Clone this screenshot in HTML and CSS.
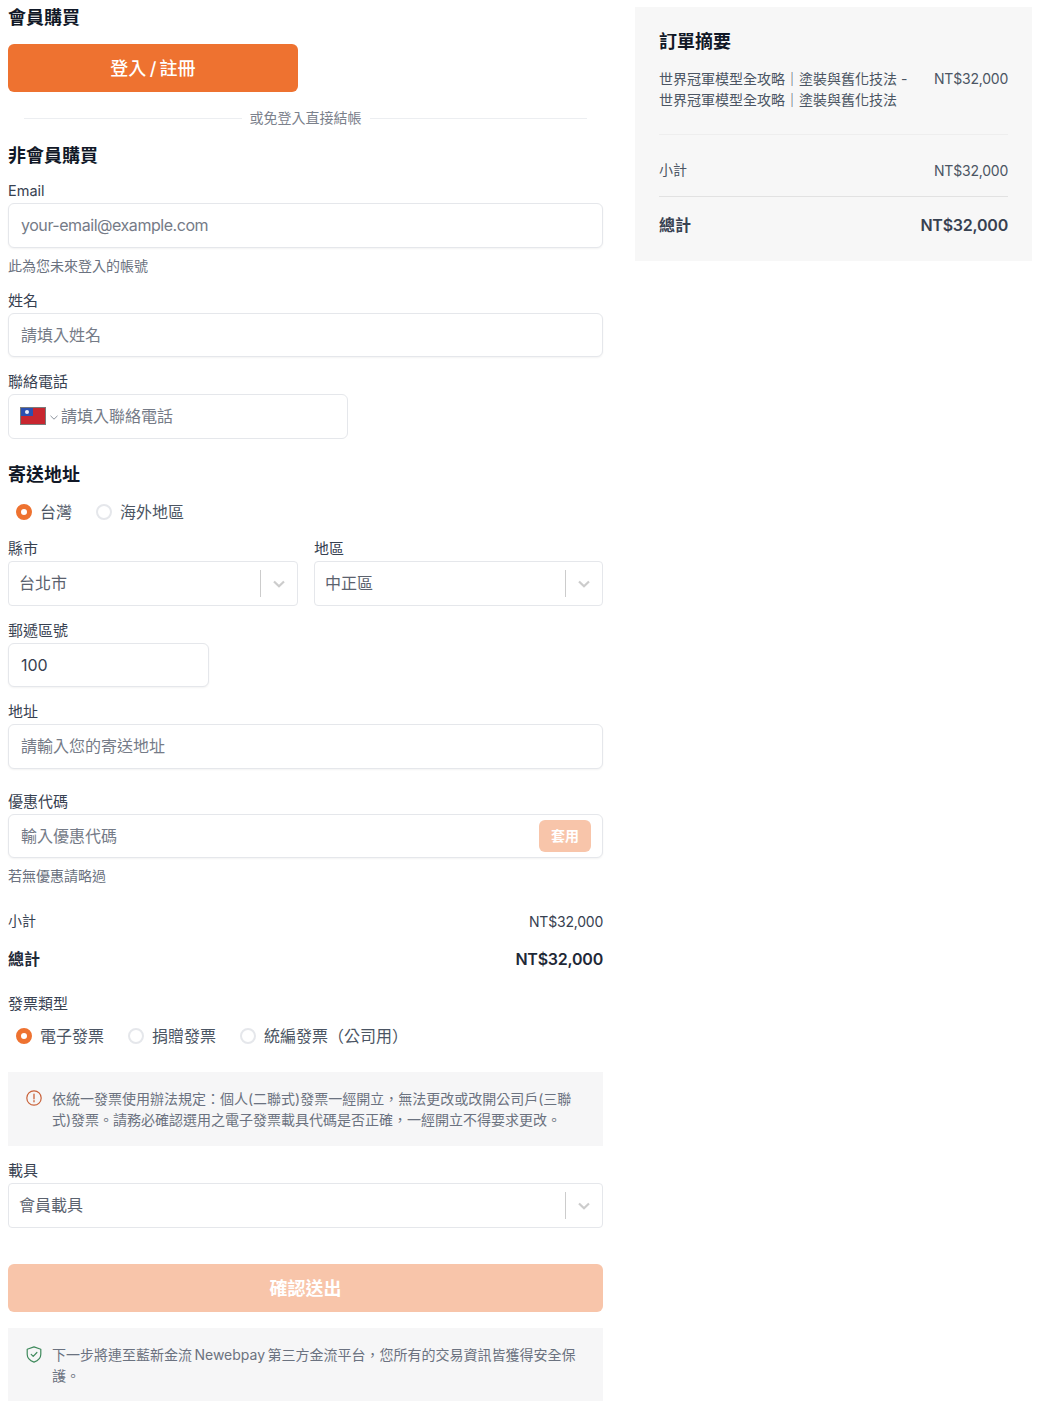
FILE: index.html
```html
<!DOCTYPE html>
<html lang="zh-Hant">
<head>
<meta charset="utf-8">
<title>結帳</title>
<link rel="stylesheet" href="styles.css">
</head>
<body>
<div class="layout">
  <main class="form">
    <h2 class="title">會員購買</h2>
    <button class="btn btn-login" type="button">登入 / 註冊</button>
    <div class="divider"><span class="divider-line"></span><span class="divider-text">或免登入直接結帳</span><span class="divider-line"></span></div>
    <h2 class="title title-guest">非會員購買</h2>

    <div class="field field-email">
      <label class="label label-latin">Email</label>
      <input class="input input-tall input-email" placeholder="your-email@example.com">
      <p class="hint">此為您未來登入的帳號</p>
    </div>
    <div class="field field-name">
      <label class="label">姓名</label>
      <input class="input" placeholder="請填入姓名">
    </div>
    <div class="field field-phone">
      <label class="label">聯絡電話</label>
      <div class="input phone input-tall">
        <svg class="flag" width="26" height="18" viewBox="0 0 26 18"><rect width="26" height="18" fill="#7a7a7a"/><rect x="1" y="1" width="24" height="16" fill="#c8262f"/><rect x="1" y="1" width="12" height="8" fill="#2b50b0"/><circle cx="7" cy="5" r="2" fill="#e8ecf8"/></svg>
        <svg class="phone-caret" width="8" height="5" viewBox="0 0 8 5"><path d="M.5.8 4 4.200 7.500.8" fill="none" stroke="#8b929c" stroke-width="1"/></svg>
        <input class="phone-input" placeholder="請填入聯絡電話">
      </div>
    </div>

    <h2 class="title title-ship">寄送地址</h2>
    <div class="radios radios-ship">
      <label class="radio"><span class="dot dot-on"></span>台灣</label>
      <label class="radio"><span class="dot"></span>海外地區</label>
    </div>
    <div class="two">
      <div class="two-a">
        <label class="label">縣市</label>
        <div class="select"><span class="select-value">台北市</span><span class="select-sep"></span><svg class="chev" width="12" height="8" viewBox="0 0 12 8"><path d="M1 1.500 6 6.300l5-4.800" fill="none" stroke="#ccc" stroke-width="2.200"/></svg></div>
      </div>
      <div class="two-b">
        <label class="label">地區</label>
        <div class="select"><span class="select-value">中正區</span><span class="select-sep"></span><svg class="chev" width="12" height="8" viewBox="0 0 12 8"><path d="M1 1.500 6 6.300l5-4.800" fill="none" stroke="#ccc" stroke-width="2.200"/></svg></div>
      </div>
    </div>
    <div class="field field-zip">
      <label class="label">郵遞區號</label>
      <input class="input input-zip" value="100">
    </div>
    <div class="field field-addr">
      <label class="label">地址</label>
      <input class="input input-tall" placeholder="請輸入您的寄送地址">
    </div>
    <div class="field field-coupon">
      <label class="label">優惠代碼</label>
      <div class="coupon">
        <input class="input input-coupon" placeholder="輸入優惠代碼">
        <button class="btn-apply" type="button">套用</button>
      </div>
      <p class="hint hint-coupon">若無優惠請略過</p>
    </div>

    <div class="row row-sub"><span>小計</span><span class="money">NT$32,000</span></div>
    <div class="row row-total"><span>總計</span><span class="money">NT$32,000</span></div>

    <div class="field field-invoice">
      <label class="label">發票類型</label>
    </div>
    <div class="radios radios-invoice">
      <label class="radio"><span class="dot dot-on"></span>電子發票</label>
      <label class="radio"><span class="dot"></span>捐贈發票</label>
      <label class="radio"><span class="dot"></span>統編發票（公司用）</label>
    </div>
    <div class="notice notice-invoice">
      <svg class="notice-icon" width="16" height="16" viewBox="0 0 16 16"><circle cx="8" cy="8" r="7.200" fill="none" stroke="#c9623a" stroke-width="1.200"/><path d="M8 4.200v4.600M8 10.600v1.200" stroke="#c9623a" stroke-width="1.300" stroke-linecap="round"/></svg>
      <p>依統一發票使用辦法規定：個人(二聯式)發票一經開立，無法更改或改開公司戶(三聯式)發票。請務必確認選用之電子發票載具代碼是否正確，一經開立不得要求更改。</p>
    </div>
    <div class="field field-carrier">
      <label class="label">載具</label>
      <div class="select"><span class="select-value">會員載具</span><span class="select-sep"></span><svg class="chev" width="12" height="8" viewBox="0 0 12 8"><path d="M1 1.500 6 6.300l5-4.800" fill="none" stroke="#ccc" stroke-width="2.200"/></svg></div>
    </div>
    <button class="btn btn-submit" type="button">確認送出</button>
    <div class="notice notice-pay">
      <svg class="notice-icon" width="16" height="17" viewBox="0 0 16 17"><path d="M8 .9 14.800 3.200v5c0 3.600-2.700 6.400-6.800 7.900C3.900 14.600 1.200 11.800 1.200 8.200v-5L8 .9Z" fill="none" stroke="#3f8a5c" stroke-width="1.200" stroke-linejoin="round"/><path d="M5.200 8.300 7.200 10.300 10.900 6.500" fill="none" stroke="#3f8a5c" stroke-width="1.200" stroke-linecap="round" stroke-linejoin="round"/></svg>
      <p>下一步將連至藍新金流 Newebpay 第三方金流平台，您所有的交易資訊皆獲得安全保護。</p>
    </div>
  </main>

  <aside class="summary">
    <h2 class="title summary-title">訂單摘要</h2>
    <div class="item">
      <p class="item-name">世界冠軍模型全攻略｜塗裝與舊化技法 - 世界冠軍模型全攻略｜塗裝與舊化技法</p>
      <span class="item-price money">NT$32,000</span>
    </div>
    <div class="sum-row sum-sub"><span>小計</span><span class="money">NT$32,000</span></div>
    <div class="sum-row sum-total"><span>總計</span><span class="money money-total">NT$32,000</span></div>
  </aside>
</div>
</body>
</html>
```

FILE: styles.css
```css
* { box-sizing: border-box; }
html, body { margin: 0; padding: 0; background: #fff; }
body {
  font-family: Inter, "Noto Sans CJK TC", sans-serif;
  font-size: 14px;
  line-height: 20px;
  color: #374151;
}
p, h2 { margin: 0; }
button, input { font-family: inherit; }

.layout {
  display: grid;
  grid-template-columns: 595px 397px;
  gap: 32px;
  align-items: start;
  padding: 4px 12px 0 8px;
  width: 1044px;
}

.money { letter-spacing: -.22px; margin-top: 2px; }
.money-total, .row-total .money { margin-top: 0; }

.title { font-size: 18px; line-height: 28px; font-weight: 700; color: #111827; }
.title-guest { margin-top: 14px; }
.title-ship { margin-top: 22px; }

.btn {
  display: block;
  border: 0;
  border-radius: 6px;
  height: 48px;
  padding: 0 0 2px;
  color: #fff;
  font-size: 18px;
  font-weight: 600;
}
.btn-login { width: 290px; margin-top: 12px; background: #ee7230; font-weight: 500; word-spacing: -1.500px; }
.btn-submit { width: 100%; margin-top: 36px; background: #f8c5aa; }

.divider { display: flex; align-items: center; gap: 8px; margin-top: 16px; padding: 0 16px; }
.divider-line { flex: 1; height: 1px; background: #eceef1; }
.divider-text { color: #7b818c; }

.label { display: block; height: 20px; margin-bottom: 2px; font-size: 15px; color: #374151; }
.label-latin { font-size: 14.500px; }
.field { margin-top: 14px; }
.field-email { margin-top: 11px; }
.field-name { margin-top: 15px; }
.field-phone { margin-top: 15px; }
.field-zip { margin-top: 15px; }
.field-addr { margin-top: 15px; }
.field-coupon { margin-top: 23px; }
.field-invoice { margin-top: 23px; }
.field-invoice .label { margin-bottom: 0; }
.field-carrier { margin-top: 15px; }

.input {
  display: block;
  width: 100%;
  height: 44px;
  padding: 0 12px;
  border: 1px solid #e5e7eb;
  border-radius: 6px;
  background: #fff;
  box-shadow: 0 1px 2px rgba(0, 0, 0, .05);
  font-size: 16px;
  color: #374151;
  outline: 0;
}
.input-tall { height: 45px; padding-bottom: 2px; }
.input-email { letter-spacing: -.45px; }
.input::placeholder, .phone-input::placeholder { color: #757b87; opacity: 1; }
.input-zip { width: 201px; }

.hint { margin-top: 8px; color: #6b7280; }
.hint-coupon { margin-top: 8px; }

.phone {
  display: flex;
  align-items: center;
  width: 340px;
  padding: 0 0 2px 11px;
  box-shadow: none;
}
.flag { flex: none; }
.phone-caret { flex: none; margin: 3px 0 0 4px; }
.phone-input {
  flex: 1;
  min-width: 0;
  margin-left: 3px;
  padding: 0;
  border: 0;
  outline: 0;
  font-size: 16px;
  background: transparent;
}

.radios { display: flex; gap: 24px; padding-left: 8px; }
.radios-ship { margin-top: 11px; }
.radios-invoice { margin-top: 10px; }
.radio { display: flex; align-items: center; gap: 8px; height: 24px; font-size: 16px; color: #4b5563; }
.dot { width: 16px; height: 16px; border-radius: 50%; border: 2px solid #e5e7eb; background: #fff; }
.dot-on { border: 5px solid #ee7230; }

.two { display: grid; grid-template-columns: 290px 289px; gap: 16px; margin-top: 15px; }

.select {
  display: flex;
  align-items: center;
  height: 45px;
  padding: 0 12px 0 10px;
  border: 1px solid #e5e7eb;
  border-radius: 4px;
  background: #fff;
}
.select-value { flex: 1; padding-bottom: 2px; font-size: 16px; color: #5b626e; }
.select-sep { width: 1px; height: 27px; background: #ccc; margin-right: 12px; }

.coupon { position: relative; }
.input-coupon { height: 44px; padding-right: 70px; }
.btn-apply {
  position: absolute;
  top: 6px;
  right: 12px;
  width: 52px;
  height: 32px;
  padding: 0 0 2px;
  border: 0;
  border-radius: 6px;
  background: #f8c5aa;
  color: #fff;
  font-size: 14px;
  font-weight: 600;
}

.row { display: flex; justify-content: space-between; align-items: center; }
.row-sub { margin-top: 25px; height: 20px; }
.row-total { margin-top: 16px; height: 24px; font-size: 16px; font-weight: 600; color: #1f2937; }

.notice {
  display: flex;
  gap: 10px;
  padding: 16px 23px 16px 18px;
  background: #f6f6f7;
  color: #6b7280;
  line-height: 21px;
}
.notice p { flex: 1; }
.notice-icon { flex: none; margin-top: 2px; }
.notice-invoice { margin-top: 24px; }
.notice-pay { margin-top: 16px; word-spacing: -1.500px; padding-bottom: 15px; }

.summary {
  margin-top: 3px;
  height: 254px;
  padding: 21px 24px 0;
  background: #f7f7f7;
}
.summary-title { color: #111827; }
.item {
  display: flex;
  justify-content: space-between;
  align-items: flex-start;
  gap: 24px;
  margin-top: 12px;
  padding-bottom: 24px;
  border-bottom: 1px solid #eeeeee;
  line-height: 21px;
  color: #4b5563;
}
.item-name { flex: 1; }
.item-price { flex: none; margin-top: 0; }
.sum-row { display: flex; justify-content: space-between; align-items: center; }
.sum-sub { height: 62px; padding-top: 8px; border-bottom: 1px solid #e2e2e2; color: #4b5563; }
.sum-total { height: 56px; font-size: 16px; font-weight: 600; color: #374151; }
```
